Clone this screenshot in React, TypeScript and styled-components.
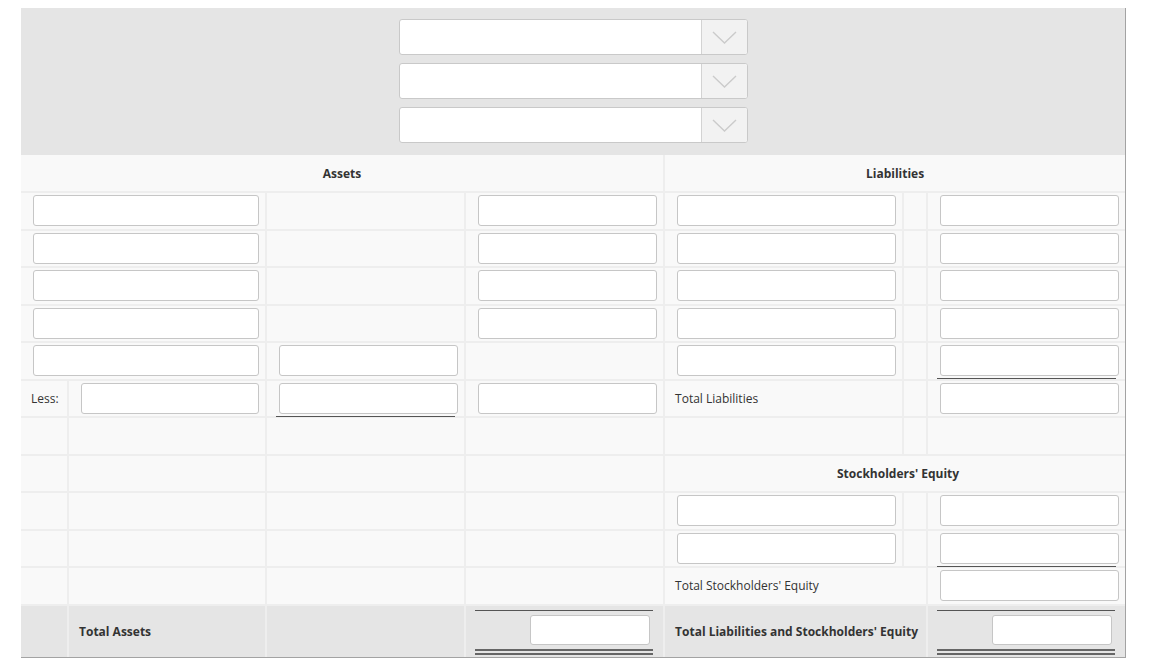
import React from "react";
import styled, { createGlobalStyle } from "styled-components";

const GlobalStyle = createGlobalStyle`
	body {
		margin: 8px;
		background: #fff;
		font-family: "Open Sans", "DejaVu Sans", sans-serif;
		color: #333;
	}
`;

const Frame = styled.div`
	margin-left: 13px;
	width: 1104px;
	border-right: 1px solid #a3a3a3;
	border-bottom: 1px solid #a3a3a3;
`;

const SelectBand = styled.div`
	display: flex;
	flex-direction: column;
	align-items: center;
	gap: 8px;
	padding: 11px 0 12px;
	background: #e5e5e5;
`;

const Dropdown = styled.div`
	display: flex;
	width: 349px;
	height: 36px;
	box-sizing: border-box;
	border: 1px solid #c9c9c9;
	border-radius: 3px;
	background: #fff;
	overflow: hidden;
`;

const DropdownValue = styled.div`
	flex: 1;
`;

const DropdownCaret = styled.div`
	display: flex;
	align-items: center;
	justify-content: center;
	width: 45px;
	background: #f2f2f2;
	border-left: 1px solid #d3d3d3;
`;

const Sheet = styled.table`
	width: 1104px;
	table-layout: fixed;
	border-collapse: separate;
	border-spacing: 0;
	background: #f9f9f9;
	font-size: 12px;
`;

const Row = styled.tr<{ $total?: boolean; $head?: boolean }>`
	height: ${(p) => (p.$total ? "51px" : p.$head ? "38px" : "37.5px")};
	background: ${(p) => (p.$total ? "#e5e5e5" : "#f9f9f9")};
`;

const HeadCell = styled.th`
	box-sizing: border-box;
	padding: 0;
	font-weight: 700;
	font-size: 12px;
	text-align: center;
	color: #333;
	border-bottom: 2px solid #eeeeee;

	&:not(:last-child) {
		border-right: 2px solid #eeeeee;
	}
`;

const Cell = styled.td<{ $kind?: "field" | "label" | "total"; $strong?: boolean; $flat?: boolean }>`
	box-sizing: border-box;
	padding: ${(p) =>
		p.$kind === "label" ? "0 6px 0 10px" : p.$kind === "total" ? "0 10px 0 9px" : "0 6px 0 12px"};
	vertical-align: ${(p) => (p.$kind === "total" ? "top" : "middle")};
	font-weight: ${(p) => (p.$strong ? 700 : 400)};
	white-space: nowrap;
	color: #333;
	border-bottom: ${(p) => (p.$flat ? "none" : "2px solid #eeeeee")};

	&:not(:last-child) {
		border-right: 2px solid #eeeeee;
	}
`;

const Field = styled.input`
	display: block;
	box-sizing: border-box;
	width: 100%;
	height: 31px;
	margin: 0;
	border: 1px solid #c6c6c6;
	border-radius: 3px;
	background: #fff;
	font: inherit;
	outline: none;
`;

const Ruled = styled.div`
	position: relative;

	&::after {
		content: "";
		position: absolute;
		left: -3px;
		right: 3px;
		bottom: -3px;
		border-bottom: 1px solid #555;
	}
`;

const TotalBox = styled.div`
	display: flex;
	justify-content: flex-end;
	margin-top: 4px;
	padding: 4px 3px 4px 0;
	border-top: 1px solid #555;
	border-bottom: 6px double #666;
`;

const TotalField = styled(Field)`
	width: 120px;
	height: 30px;
`;

function Caret() {
	return (
		<svg width="45" height="36" viewBox="0 0 45 36">
			<polyline points="11,13 22.5,24 34,13" fill="none" stroke="#cbcbcb" strokeWidth="1.4" />
		</svg>
	);
}

function Select() {
	return (
		<Dropdown>
			<DropdownValue />
			<DropdownCaret>
				<Caret />
			</DropdownCaret>
		</Dropdown>
	);
}

function FieldCell(props: { span?: number; ruled?: boolean }) {
	return (
		<Cell colSpan={props.span}>
			{props.ruled ? (
				<Ruled>
					<Field />
				</Ruled>
			) : (
				<Field />
			)}
		</Cell>
	);
}

function Blank(props: { span?: number }) {
	return <Cell colSpan={props.span} />;
}

function EmptyLeft() {
	return (
		<>
			<Blank />
			<Blank />
			<Blank />
			<Blank />
		</>
	);
}

const widths = [48, 198, 199, 199, 239, 24, 197];

export default function App() {
	return (
		<>
			<GlobalStyle />
			<Frame>
				<SelectBand>
					<Select />
					<Select />
					<Select />
				</SelectBand>
				<Sheet>
					<colgroup>
						{widths.map((w, i) => (
							<col key={i} style={{ width: w }} />
						))}
					</colgroup>
					<thead>
						<Row $head>
							<HeadCell colSpan={4}>Assets</HeadCell>
							<HeadCell colSpan={3}>Liabilities</HeadCell>
						</Row>
					</thead>
					<tbody>
						{[0, 1, 2, 3].map((i) => (
							<Row key={i}>
								<FieldCell span={2} />
								<Blank />
								<FieldCell />
								<FieldCell />
								<Blank />
								<FieldCell />
							</Row>
						))}
						<Row>
							<FieldCell span={2} />
							<FieldCell />
							<Blank />
							<FieldCell />
							<Blank />
							<FieldCell ruled />
						</Row>
						<Row>
							<Cell $kind="label">Less:</Cell>
							<FieldCell />
							<FieldCell ruled />
							<FieldCell />
							<Cell $kind="label">Total Liabilities</Cell>
							<Blank />
							<FieldCell />
						</Row>
						<Row>
							<EmptyLeft />
							<Blank />
							<Blank />
							<Blank />
						</Row>
						<Row>
							<EmptyLeft />
							<Cell colSpan={3} $strong style={{ textAlign: "center" }}>
								Stockholders' Equity
							</Cell>
						</Row>
						<Row>
							<EmptyLeft />
							<FieldCell />
							<Blank />
							<FieldCell />
						</Row>
						<Row>
							<EmptyLeft />
							<FieldCell />
							<Blank />
							<FieldCell ruled />
						</Row>
						<Row>
							<EmptyLeft />
							<Cell colSpan={2} $kind="label">
								Total Stockholders' Equity
							</Cell>
							<FieldCell />
						</Row>
						<Row $total>
							<Cell $flat />
							<Cell $flat $kind="label" $strong>
								Total Assets
							</Cell>
							<Cell $flat />
							<Cell $flat $kind="total">
								<TotalBox>
									<TotalField />
								</TotalBox>
							</Cell>
							<Cell $flat colSpan={2} $kind="label" $strong>
								Total Liabilities and Stockholders' Equity
							</Cell>
							<Cell $flat $kind="total">
								<TotalBox>
									<TotalField />
								</TotalBox>
							</Cell>
						</Row>
					</tbody>
				</Sheet>
			</Frame>
		</>
	);
}
